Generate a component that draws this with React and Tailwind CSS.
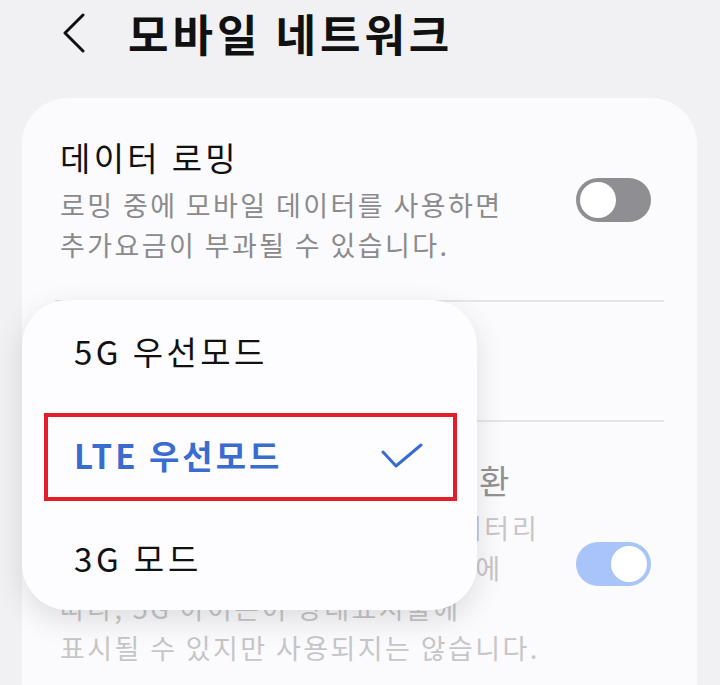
import React from 'react'

const FONT = { fontFamily: '"Noto Sans CJK KR", "Noto Sans", sans-serif' }

function Toggle({ on }) {
  return (
    <div
      className={`relative w-[75px] h-[44px] rounded-full shrink-0 ${on ? 'bg-[#a9c4f9]' : 'bg-[#8f8f93]'}`}
    >
      <div
        className={`absolute top-[4px] w-[36px] h-[36px] rounded-full bg-white ${on ? 'right-[4px]' : 'left-[4px]'}`}
      />
    </div>
  )
}

function Divider() {
  return <div className="mx-[33px] h-[2px] bg-[#e6e6ea]" />
}

export default function App() {
  return (
    <div className="relative w-[720px] h-[685px] overflow-hidden bg-[#f1f1f3]" style={FONT}>
      {/* Header */}
      <div className="flex items-center h-[64px] pt-[2px]">
        <svg className="ml-[62px]" width="24" height="40" viewBox="0 0 24 40" fill="none">
          <polyline points="21,2 3,20 21,38" stroke="#111" strokeWidth="3" strokeLinecap="round" strokeLinejoin="round" />
        </svg>
        <h1 className="ml-[42px] text-[44px] font-bold text-[#111] leading-none tracking-[4px]">모바일 네트워크</h1>
      </div>

      {/* Card */}
      <div className="mt-[34px] ml-[22px] w-[675px] h-[700px] rounded-[46px] bg-[#fbfbfd]">
        {/* Roaming */}
        <div className="flex items-center justify-between pl-[38px] pr-[46px] h-[202px] pt-[2px]">
          <div>
            <div className="text-[33px] text-[#111] leading-[44px] tracking-[3.3px]">데이터 로밍</div>
            <div className="mt-[6px] text-[27px] text-[#8a8a8c] leading-[40px] tracking-[2.4px]">
              <div>로밍 중에 모바일 데이터를 사용하면</div>
              <div>추가요금이 부과될 수 있습니다.</div>
            </div>
          </div>
          <Toggle on={false} />
        </div>
        <Divider />

        {/* Network mode (under popup) */}
        <div className="pl-[38px] h-[118px] pt-[24px] tracking-[3px]">
          <div className="text-[33px] text-[#111] leading-[44px]">네트워크 모드</div>
          <div className="text-[27px] text-[#3a6cd0] leading-[40px]">LTE 우선모드</div>
        </div>
        <Divider />

        {/* 5G icon */}
        <div className="flex items-start justify-between pl-[38px] pr-[46px] pt-[36px]">
          <div className="whitespace-nowrap">
            <div className="text-[33px] text-[#929294] leading-[44px] tracking-[2.8px]">5G 네트워크 상태 아이콘 전환</div>
            <div className="mt-[6px] text-[27px] text-[#c6c6c8] leading-[40px] tracking-[2.4px]">
              <div className="tracking-[2.9px]">네트워크 연결 상태를 확인하여 배터리</div>
              <div>소모를 줄여주며 사용 환경과 상황에</div>
              <div>따라, 5G 아이콘이 상태표시줄에</div>
              <div>표시될 수 있지만 사용되지는 않습니다.</div>
            </div>
          </div>
          <div className="mt-[84px]">
            <Toggle on />
          </div>
        </div>
      </div>

      {/* Popup menu */}
      <div className="absolute left-[22px] top-[300px] w-[455px] h-[310px] rounded-[46px] bg-[#fdfdff] shadow-[0_10px_30px_rgba(0,0,0,0.12)]">
        <div className="flex items-center h-[104px] pl-[52px] text-[33px] text-[#111] tracking-[3.4px]">5G 우선모드</div>
        <div className="relative flex items-center justify-between h-[104px] pl-[52px] pr-[54px]">
          <div className="text-[33px] font-bold text-[#3a6cd0] tracking-[3px]">LTE 우선모드</div>
          <svg width="42" height="26" viewBox="0 0 42 26" fill="none">
            <polyline points="2,9 15,23 40,2" stroke="#3a6cd0" strokeWidth="3" strokeLinecap="round" strokeLinejoin="round" />
          </svg>
          <div className="absolute left-[22px] right-[20px] top-[9px] bottom-[7px] border-[4px] border-[#e31e2a]" />
        </div>
        <div className="flex items-center h-[102px] pl-[52px] text-[33px] text-[#111] tracking-[3.8px]">3G 모드</div>
      </div>
    </div>
  )
}
